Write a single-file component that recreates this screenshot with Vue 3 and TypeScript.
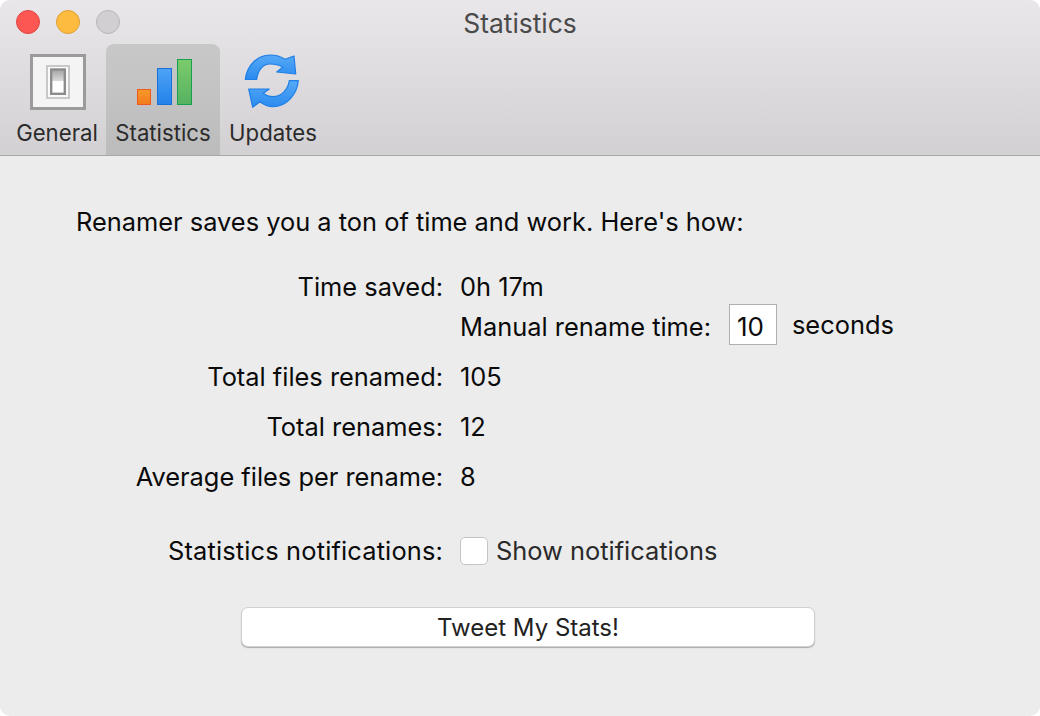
<script setup lang="ts">
const rows = [
  { label: 'Total files renamed:', value: '105' },
  { label: 'Total renames:', value: '12' },
  { label: 'Average files per rename:', value: '8' },
]
</script>

<template>
  <div class="window">
    <header class="toolbar">
      <div class="titlebar">
        <div class="lights">
          <span class="light red"></span>
          <span class="light yellow"></span>
          <span class="light gray"></span>
        </div>
        <div class="title">Statistics</div>
      </div>
      <nav class="tabs">
        <div class="tab general">
          <svg class="icon gen-icon" width="56" height="56" viewBox="0 0 56 56">
            <defs>
              <linearGradient id="sw" x1="0" y1="0" x2="0" y2="1">
                <stop offset="0" stop-color="#a4a4a4" />
                <stop offset="0.45" stop-color="#d8d8d8" />
                <stop offset="0.5" stop-color="#ffffff" />
              </linearGradient>
            </defs>
            <rect x="1.500" y="1.500" width="53" height="53" fill="#f4f4f4" stroke="#9b9b9b" stroke-width="3" />
            <rect x="17" y="12" width="22" height="32" fill="#fafafa" stroke="#c8c8c8" stroke-width="2" />
            <rect x="21.200" y="15.500" width="13.600" height="24.300" fill="url(#sw)" stroke="#8c8c8c" stroke-width="2.400" />
          </svg>
          <span>General</span>
        </div>
        <div class="tab statistics">
          <svg class="icon" width="114" height="58" viewBox="0 0 114 58">
            <defs>
              <linearGradient id="o" x1="0" y1="0" x2="0" y2="1"><stop offset="0" stop-color="#f9992a" /><stop offset="1" stop-color="#f27a1c" /></linearGradient>
              <linearGradient id="b" x1="0" y1="0" x2="0" y2="1"><stop offset="0" stop-color="#4ea3f5" /><stop offset="1" stop-color="#2281ea" /></linearGradient>
              <linearGradient id="g" x1="0" y1="0" x2="0" y2="1"><stop offset="0" stop-color="#7ccb6c" /><stop offset="1" stop-color="#55b260" /></linearGradient>
            </defs>
            <rect x="31.500" y="36.500" width="13" height="15" fill="url(#o)" stroke="#f0591c" />
            <rect x="51.500" y="15.500" width="14" height="36" fill="url(#b)" stroke="#1a70da" />
            <rect x="71.500" y="6.500" width="14" height="45" fill="url(#g)" stroke="#17a04f" />
          </svg>
          <span>Statistics</span>
        </div>
        <div class="tab updates">
          <svg class="icon" width="58" height="58" viewBox="0 0 58 58">
            <defs>
              <linearGradient id="s" x1="0" y1="0" x2="0" y2="1"><stop offset="0" stop-color="#57a9f6" /><stop offset="1" stop-color="#2a8bef" /></linearGradient>
            </defs>
            <path d="M1.300 26.300C3 12 14 2 26 2C32 2 37 3.500 41 6.300L50 3L51.700 21L32.700 19L38.700 14.300C35 12 31 11 26 11C19 11 14 17 12.700 26.300Z" fill="url(#s)" stroke="#1f7fe6" stroke-width="1.200" stroke-linejoin="round" />
            <path d="M54.300 27.700L45.300 27.700C44 37 37 43.700 29 43.700C26 43.700 22 42.500 19.300 40.300L25.300 36L4.700 36L8.700 54.300L16 48.700C20 52 25 53.700 29 53.700C42 53.700 53 42 54.300 27.700Z" fill="url(#s)" stroke="#1f7fe6" stroke-width="1.200" stroke-linejoin="round" />
          </svg>
          <span>Updates</span>
        </div>
      </nav>
    </header>

    <main class="content">
      <p class="intro">Renamer saves you a ton of time and work. Here's how:</p>
      <div class="form">
        <div class="label">Time saved:</div>
        <div class="value stack">
          <div>0h 17m</div>
          <div class="manual">
            <span class="manual-label">Manual rename time:</span>
            <span class="input">10</span>
            <span class="unit">seconds</span>
          </div>
        </div>
        <template v-for="r in rows" :key="r.label">
          <div class="label">{{ r.label }}</div>
          <div class="value">{{ r.value }}</div>
        </template>
        <div class="label notif wide">Statistics notifications:</div>
        <div class="value notif check">
          <span class="box"></span>
          <span class="soft">Show notifications</span>
        </div>
      </div>
      <button class="tweet" type="button">Tweet My Stats!</button>
    </main>
  </div>
</template>

<style>
html, body { margin: 0; background: #fff; }
</style>

<style scoped>
.window {
  width: 1040px;
  height: 716px;
  background: #ececec;
  border-radius: 10px;
  overflow: hidden;
  display: flex;
  flex-direction: column;
  font-family: Inter, Roboto, sans-serif;
  font-size: 25.400px;
  color: #0a0a0a;
}
.toolbar {
  height: 156px;
  flex: none;
  box-sizing: border-box;
  background: linear-gradient(#e9e7e9, #d2d0d2);
  box-shadow: inset 0 -1px 0 #a9a7a9;
  display: flex;
  flex-direction: column;
}
.titlebar { height: 44px; position: relative; display: flex; align-items: center; justify-content: center; flex: none; }
.lights { position: absolute; left: 16px; top: 10px; display: flex; gap: 16px; }
.light { width: 24px; height: 24px; border-radius: 50%; box-sizing: border-box; border: 1px solid; }
.red { background: #fc5753; border-color: #df4744; }
.yellow { background: #fdbc40; border-color: #de9f34; }
.gray { background: #d1cfd1; border-color: #b9b7b9; }
.title { font-size: 26.400px; color: #4a4a4a; padding-top: 1px; }
.tabs { display: flex; flex: 1; padding-left: 8px; }
.tab { display: flex; flex-direction: column; align-items: center; color: #2b2b2b; font-size: 22.200px; padding-top: 9px; }
.tab span { margin-top: 8px; line-height: 28px; white-space: nowrap; }
.icon { display: block; flex: none; }
.gen-icon { margin: 1px 0 1px 2px; }
.general { width: 98px; }
.statistics { width: 114px; background: linear-gradient(#c9c8c9, #bdbcbd); border-radius: 8px 8px 0 0; margin-bottom: 1px; }
.updates { width: 106px; }
.content { padding: 0 76px; flex: 1; }
.intro { margin: 51px 0 0; line-height: 30px; white-space: nowrap; }
.form { display: grid; grid-template-columns: 367px 1fr; column-gap: 17px; margin-top: 35px; align-items: start; }
.label { text-align: right; line-height: 30px; white-space: nowrap; }
.wide { letter-spacing: 0.16px; }
.value { line-height: 30px; white-space: nowrap; margin-bottom: 20px; }
.stack { margin-bottom: 17px; }
.manual { display: flex; align-items: flex-start; margin-top: 2px; height: 41px; }
.manual-label { padding-top: 8px; }
.input { width: 48px; height: 41px; box-sizing: border-box; background: #fff; border: 1px solid #b0b0b0; margin: 0 15px 0 18px; display: flex; align-items: center; justify-content: center; font-size: 26px; padding: 5px 5px 0 0; }
.unit { padding-top: 6px; }
.notif { margin-top: 24px; }
.check { display: flex; align-items: center; gap: 8px; }
.box { width: 28px; height: 28px; box-sizing: border-box; background: #fff; border: 1px solid #c4c4c4; border-radius: 5px; }
.soft { color: #2a2a2a; }
.tweet {
  display: block;
  width: 574px;
  height: 40px;
  margin: 21px 0 0 165px;
  background: #fff;
  border: 1px solid #d0d0d0;
  border-radius: 7px;
  box-shadow: 0 1px 1px #aaa;
  font-family: inherit;
  font-size: 24px;
  color: #222;
  padding: 0;
}
</style>
